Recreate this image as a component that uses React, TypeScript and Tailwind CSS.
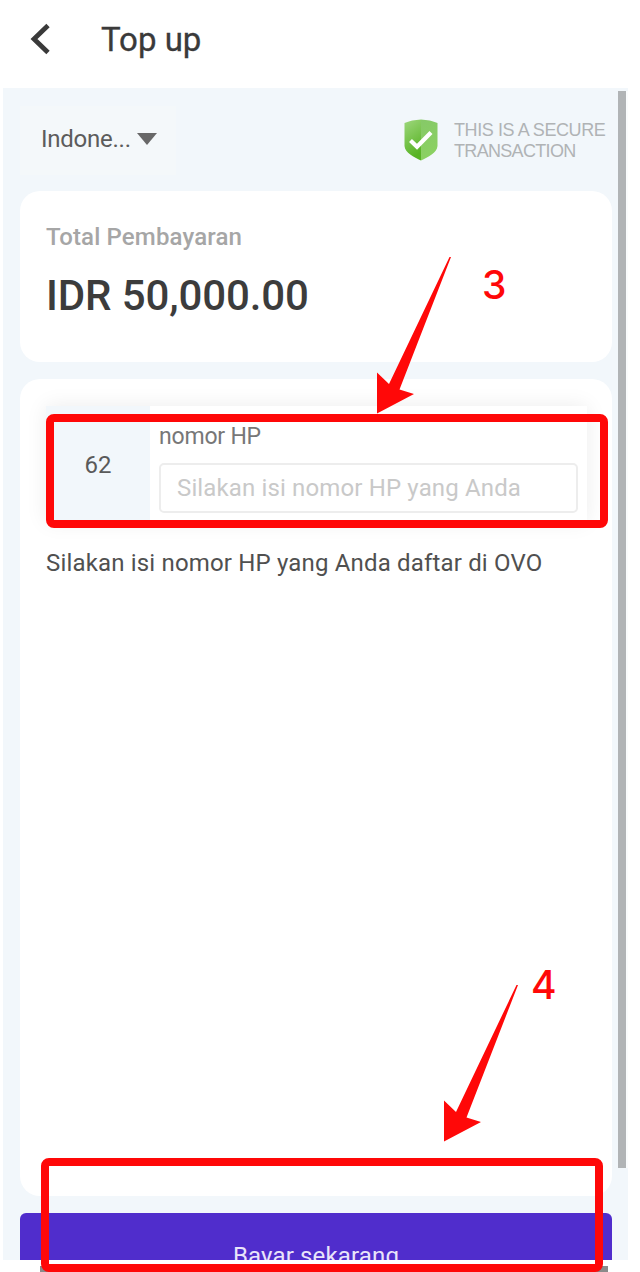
function Header() {
  return (
    <header className="flex h-[88px] items-start pl-[30px] pt-[20px] text-[#3a3a3a]">
      <svg className="mt-[3px] h-[32px] w-[20px]" viewBox="0 0 20 32" fill="none" stroke="#3a3a3a" strokeWidth="4.8">
        <path d="M18 2.500 4 16 18 29.500" />
      </svg>
      <h1 className="ml-[51px] font-[Roboto,sans-serif] text-[33px] leading-[40px] [-webkit-text-stroke:0.3px_#3a3a3a]">Top up</h1>
    </header>
  );
}

function Shield() {
  return (
    <svg className="h-[42px] w-[34px]" viewBox="0 0 34 42">
      <defs>
        <linearGradient id="left" x1="0" y1="0" x2="0.3" y2="1">
          <stop offset="0" stopColor="#9ed77d" />
          <stop offset="1" stopColor="#58b324" />
        </linearGradient>
        <linearGradient id="right" x1="0" y1="0" x2="0.2" y2="1">
          <stop offset="0" stopColor="#86c968" />
          <stop offset="1" stopColor="#8bd161" />
        </linearGradient>
      </defs>
      <path d="M17 .5C11 .8 5 2 .5 4V27C1 34 10 38 17 41.5Z" fill="url(#left)" />
      <path d="M17 .5C23 .8 29 2 33.5 4V27C33 34 24 38 17 41.5Z" fill="url(#right)" />
      <path d="m6.500 21.500 6.500 6.200L27 13.500" fill="none" stroke="#fff" strokeWidth="4.2" />
    </svg>
  );
}

function Arrow({ className }: { className: string }) {
  return (
    <svg className={className} viewBox="0 0 76 158" fill="#ff0808">
      <path d="M73.5 1 75 1 23.5 133.5 38 138 1 157.500 1 116.5 13 128Z" />
    </svg>
  );
}

export default function App() {
  return (
    <div className="relative h-[1272px] w-[640px] overflow-hidden bg-white font-[Roboto,sans-serif]">
      <Header />
      <main className="ml-[3px] flex h-[1172px] w-[625px] overflow-hidden bg-[#f2f7fb]">
        <div className="ml-[17px] w-[592px] shrink-0">
          <div className="flex h-[103px] items-start justify-between pt-[18px]">
            <div className="flex h-[69px] w-[156px] items-center bg-[#f4f8fa] pl-[21px] pb-[3px]">
              <span className="text-[24px] leading-[30px] tracking-[-0.25px] text-[#5c5c5c]">Indone...</span>
              <svg className="ml-[6px] h-[12px] w-[20px]" viewBox="0 0 20 12">
                <path d="M0 0H20L10 12Z" fill="#686868" />
              </svg>
            </div>
            <div className="flex pr-[6px] pt-[13px]">
              <Shield />
              <p className="ml-[16px] w-[152px] whitespace-nowrap pt-[1px] font-['Liberation_Sans'] text-[18px] leading-[21px] text-[#b0b3b5]">
                <span className="tracking-[-0.42px]">THIS IS A SECURE</span>
                <br />
                <span className="tracking-[-0.68px]">TRANSACTION</span>
              </p>
            </div>
          </div>
          <section className="h-[171px] rounded-[20px] bg-white pl-[26px] pt-[31px]">
            <p className="text-[24px] font-medium leading-[30px] tracking-[0.15px] text-[#a6a6a6]">Total Pembayaran</p>
            <p className="mt-[18px] text-[42px] font-medium leading-[52px] tracking-[-0.12px] text-[#3c3c3c]">IDR 50,000.00</p>
          </section>
          <section className="mt-[17px] h-[817px] rounded-[20px] bg-white px-[26px] pt-[27px]">
            <div className="flex h-[116px] w-[541px] bg-white shadow-[0_0_20px_rgba(0,0,0,0.08)]">
              <div className="flex w-[104px] items-center justify-center bg-[#f2f7fb] pt-[2px] text-[24px] text-[#5a5a5a]">62</div>
              <div className="flex-1 pl-[9px] pt-[16px]">
                <label className="block text-[23px] leading-[30px] tracking-[-0.2px] text-[#777]">nomor HP</label>
                <div className="mt-[11px] flex h-[50px] w-[419px] items-center rounded-[5px] border-2 border-[#ededed] pl-[16px] text-[24px] tracking-[0.14px] text-[#c9c9c9]">
                  Silakan isi nomor HP yang Anda
                </div>
              </div>
            </div>
            <p className="mt-[26px] whitespace-nowrap text-[24px] leading-[30px] tracking-[0.17px] text-[#505050]">
              Silakan isi nomor HP yang Anda daftar di OVO
            </p>
          </section>
          <button className="mt-[17px] block h-[85px] w-full rounded-[6px] bg-[#502dcc] text-[24px] tracking-[0.15px] text-[#e9e4fa]">
            Bayar sekarang
          </button>
        </div>
        <div className="ml-[6px] mt-[3px] h-[1077px] w-[8px] bg-[#b1b4b6] shadow-[2px_0_0_#fafcfd]" />
      </main>
      <div className="absolute left-[40px] top-[1266px] h-[6px] w-[568px] bg-[#8a8a8a]" />
      <div className="absolute left-[46px] top-[414px] h-[114px] w-[562px] rounded-[8px] border-8 border-[#ff0808]" />
      <div className="absolute left-[41px] top-[1158px] h-[114px] w-[562px] rounded-[8px] border-8 border-[#ff0808]" />
      <Arrow className="absolute left-[376px] top-[256px] h-[158px] w-[76px]" />
      <Arrow className="absolute left-[443px] top-[984px] h-[158px] w-[76px]" />
      <span className="absolute left-[482px] top-[260px] font-[Inter] text-[39px] font-medium leading-[50px] text-[#ff0808]">3</span>
      <span className="absolute left-[531px] top-[960px] font-[Inter] text-[39px] font-medium leading-[50px] text-[#ff0808]">4</span>
    </div>
  );
}
